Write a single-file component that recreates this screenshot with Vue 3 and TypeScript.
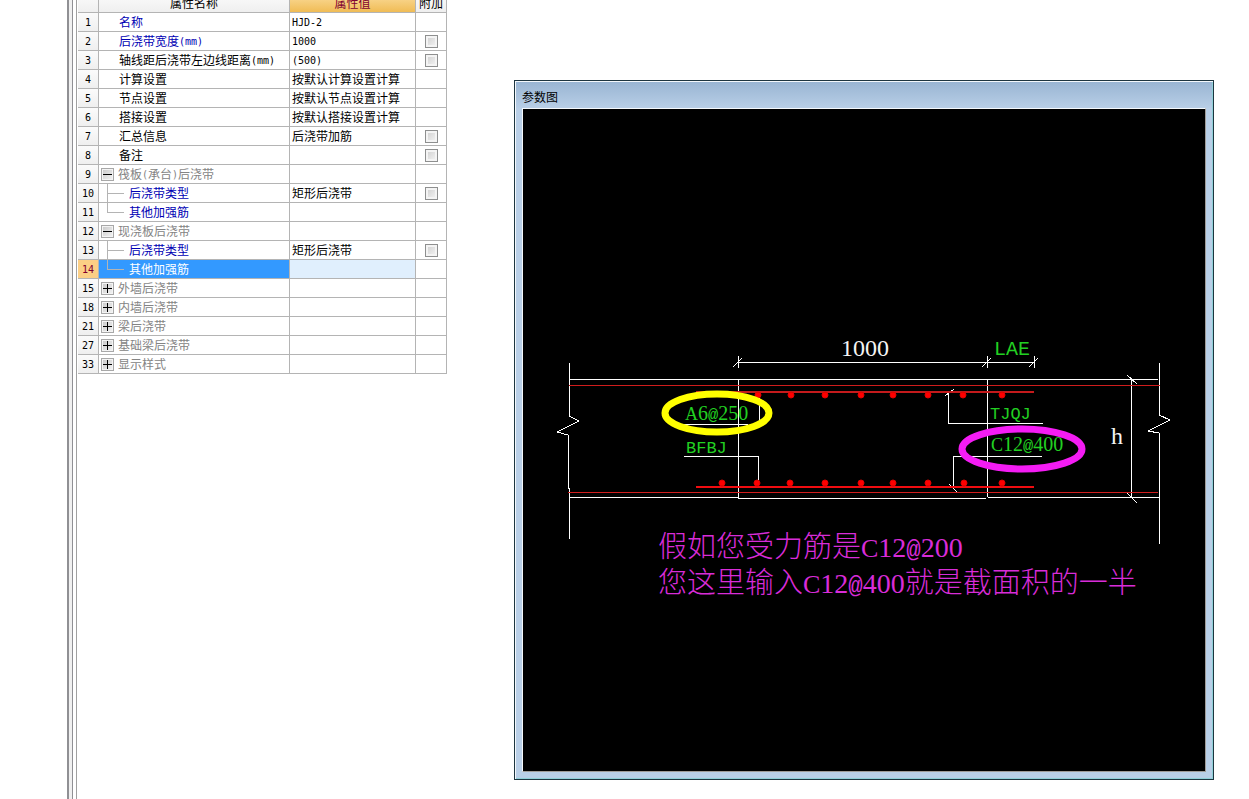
<script setup lang="ts">
import { computed, reactive, ref } from 'vue'

interface Part { text: string; latin?: boolean }
interface Row {
  id: number
  name: Part[]
  value: Part[]
  kind: 'key' | 'plain' | 'group' | 'child'
  check?: boolean
  parent?: number
  last?: boolean
}

const zh = (text: string): Part => ({ text })
const en = (text: string): Part => ({ text, latin: true })

const rows: Row[] = [
  { id: 1, name: [zh('名称')], value: [en('HJD-2')], kind: 'key' },
  { id: 2, name: [zh('后浇带宽度'), en('(mm)')], value: [en('1000')], kind: 'key', check: true },
  { id: 3, name: [zh('轴线距后浇带左边线距离'), en('(mm)')], value: [en('(500)')], kind: 'plain', check: true },
  { id: 4, name: [zh('计算设置')], value: [zh('按默认计算设置计算')], kind: 'plain' },
  { id: 5, name: [zh('节点设置')], value: [zh('按默认节点设置计算')], kind: 'plain' },
  { id: 6, name: [zh('搭接设置')], value: [zh('按默认搭接设置计算')], kind: 'plain' },
  { id: 7, name: [zh('汇总信息')], value: [zh('后浇带加筋')], kind: 'plain', check: true },
  { id: 8, name: [zh('备注')], value: [], kind: 'plain', check: true },
  { id: 9, name: [zh('筏板'), en('('), zh('承台'), en(')'), zh('后浇带')], value: [], kind: 'group' },
  { id: 10, name: [zh('后浇带类型')], value: [zh('矩形后浇带')], kind: 'child', check: true, parent: 9 },
  { id: 11, name: [zh('其他加强筋')], value: [], kind: 'child', parent: 9, last: true },
  { id: 12, name: [zh('现浇板后浇带')], value: [], kind: 'group' },
  { id: 13, name: [zh('后浇带类型')], value: [zh('矩形后浇带')], kind: 'child', check: true, parent: 12 },
  { id: 14, name: [zh('其他加强筋')], value: [], kind: 'child', parent: 12, last: true },
  { id: 15, name: [zh('外墙后浇带')], value: [], kind: 'group' },
  { id: 18, name: [zh('内墙后浇带')], value: [], kind: 'group' },
  { id: 21, name: [zh('梁后浇带')], value: [], kind: 'group' },
  { id: 27, name: [zh('基础梁后浇带')], value: [], kind: 'group' },
  { id: 33, name: [zh('显示样式')], value: [], kind: 'group' },
]

const open = reactive<Record<number, boolean>>({ 9: true, 12: true })
const checked = reactive<Record<number, boolean>>({})
const selected = ref(14)
const visible = computed(() => rows.filter(r => r.parent === undefined || open[r.parent]))
const label = (r: Row) => r.name.map(p => p.text).join('')

const topBars = [758, 791, 825, 861, 893, 928, 963, 1002]
const bottomBars = [722, 757, 790, 825, 861, 893, 928, 964, 1002]
const ticks = [738, 987, 1034]
</script>

<template>
  <main class="page">
    <div class="splitter"></div>
    <section class="properties">
      <table>
        <colgroup><col class="c-no"><col class="c-name"><col class="c-value"><col class="c-add"></colgroup>
        <thead>
          <tr><th></th><th>属性名称</th><th class="active">属性值</th><th>附加</th></tr>
        </thead>
        <tbody>
          <tr v-for="r in visible" :key="r.id" :class="{ selected: r.id === selected }" @click="selected = r.id">
            <th scope="row"><span class="latin">{{ r.id }}</span></th>
            <td class="name" :class="r.kind">
              <div class="cell">
                <button v-if="r.kind === 'group'" type="button" class="toggle"
                  :aria-label="label(r)" :aria-expanded="!!open[r.id]" @click.stop="open[r.id] = !open[r.id]">
                  <svg viewBox="0 0 9 9" shape-rendering="crispEdges">
                    <rect x="0" y="4" width="9" height="1" />
                    <rect v-if="!open[r.id]" x="4" y="0" width="1" height="9" />
                  </svg>
                </button>
                <span v-if="r.kind === 'child'" class="branch" :class="{ last: r.last }"></span>
                <span class="label"><span v-for="(p, i) in r.name" :key="i" :class="{ latin: p.latin }">{{ p.text }}</span></span>
              </div>
            </td>
            <td class="value"><span v-for="(p, i) in r.value" :key="i" :class="{ latin: p.latin }">{{ p.text }}</span></td>
            <td class="add"><input v-if="r.check" v-model="checked[r.id]" type="checkbox" :aria-label="'附加 ' + label(r)"></td>
          </tr>
        </tbody>
      </table>
    </section>

    <section class="window">
      <h1>参数图</h1>
      <div class="canvas">
        <svg class="drawing" viewBox="523 109 682 662">
          <g class="white" shape-rendering="crispEdges">
            <path d="M569 363V416L579 421L557 432L568 435V488H569V539" />
            <path d="M1159 363V415L1170 420L1148 431L1159 433V544" />
            <path d="M569 379H1158M569 497H738M738 498H986M988 497H1159" />
            <path d="M738 379V498M987 379V497" />
            <path d="M738 362H1035" />
            <path v-for="x in ticks" :key="x" :d="`M${x} 356V368M${x - 5} 367L${x + 4} 358`" />
            <path d="M1131 379V498M1127 375L1137 384M1127 493L1137 503" />
            <path d="M684 424H748M759 398V424M684 456H758V480" />
            <path d="M1043 423H948V392M945 396L954 389" />
            <path d="M1042 456H953V487M949 484L957 492" />
          </g>
          <g class="steel" shape-rendering="crispEdges">
            <path d="M569 385H1160" />
            <path d="M568 492H1158" />
            <path class="dull" d="M696 392H1034" />
            <path class="bright" d="M696 487H1034" />
          </g>
          <g class="bars">
            <circle v-for="x in topBars" :key="x" :cx="x" cy="395" r="3" />
            <circle v-for="x in bottomBars" :key="x" :cx="x" cy="483" r="3" />
          </g>
          <text class="dim" x="841" y="356">1000</text>
          <text class="dim" x="1111" y="444">h</text>
          <text class="code large" x="994" y="355">LAE</text>
          <text class="code" x="685" y="420"><tspan class="cap">A</tspan><tspan class="num">6</tspan>@<tspan class="num">250</tspan></text>
          <text class="code" x="686" y="453">BFBJ</text>
          <text class="code" x="990" y="419">TJQJ</text>
          <text class="code" x="991" y="451"><tspan class="cap">C</tspan><tspan class="num">12</tspan>@<tspan class="num">400</tspan></text>
          <ellipse class="ring yellow" cx="717" cy="413" rx="52" ry="19" />
          <ellipse class="ring magenta" cx="1022" cy="449" rx="60" ry="20" />
          <text class="note" x="658" y="557">假如您受力筋是<tspan class="letter">C</tspan><tspan class="digits">12</tspan><tspan class="at">@</tspan><tspan class="digits">200</tspan></text>
          <text class="note" x="658" y="593">您这里输入<tspan class="letter">C</tspan><tspan class="digits">12</tspan><tspan class="at">@</tspan><tspan class="digits">400</tspan>就是截面积的一半</text>
        </svg>
      </div>
    </section>
  </main>
</template>

<style>
html, body { margin: 0; background: #fff; }
</style>

<style scoped>
.page {
  display: flex;
  height: 100vh;
  overflow: hidden;
  box-sizing: border-box;
  padding-left: 67px;
  background: #fff;
  font: 12px/18px "Noto Sans CJK SC", sans-serif;
  color: #000;
}
.splitter {
  flex: none;
  box-sizing: border-box;
  width: 6px;
  border-left: 2px solid #909094;
  border-right: 1px solid #909094;
  background: #f0f0f0;
}
.properties {
  flex: none;
  margin-left: 3px;
  padding-left: 1px;
  border-left: 1px solid #a0a0a0;
}
table {
  width: 369px;
  margin-top: -6px;
  table-layout: fixed;
  border-spacing: 0;
}
.c-no { width: 21px; }
.c-name { width: 191px; }
.c-value { width: 126px; }
.c-add { width: 31px; }
th, td {
  box-sizing: border-box;
  height: 19px;
  padding: 0;
  border-right: 1px solid #b4b4b4;
  border-bottom: 1px solid #b4b4b4;
  font-weight: 400;
  line-height: 18px;
  white-space: nowrap;
}
th { background: linear-gradient(#fbfbfb, #efefef); text-align: center; }
th.active { background: linear-gradient(#fbdc9c, #f0bc55); color: #800030; }
.latin { font: 10px/0 "DejaVu Sans Mono", monospace; vertical-align: 1px; }
.cell { display: flex; align-items: center; height: 18px; }
.label { padding-left: 20px; }
.key, .child { color: #0000b4; }
.group { color: #848484; }
.group .label { padding-left: 4px; }
.child .label { padding-left: 5px; }
.toggle {
  flex: none;
  display: grid;
  place-items: center;
  box-sizing: border-box;
  width: 13px;
  height: 13px;
  margin-left: 2px;
  padding: 0;
  border: 1px solid #a8a8a8;
  background: linear-gradient(135deg, #c8c8c8, #f4f4f4);
  box-shadow: inset 0 0 0 1px #f4f4f4;
}
.toggle svg { width: 9px; height: 9px; fill: #000; }
.branch {
  flex: none;
  width: 17px;
  height: 20px;
  margin-left: 8px;
  background: linear-gradient(#b4b4b4, #b4b4b4) 0 10px / 17px 1px no-repeat,
    linear-gradient(#b4b4b4, #b4b4b4) 0 0 / 1px 20px no-repeat;
}
.branch.last { background-size: 17px 1px, 1px 10px; }
.value { padding-left: 2px; }
.add { text-align: center; vertical-align: middle; line-height: 0; }
.add input {
  appearance: none;
  box-sizing: border-box;
  width: 13px;
  height: 13px;
  margin: 0;
  vertical-align: middle;
  border: 1px solid #8e8f8f;
  background: linear-gradient(135deg, #cdcdcd, #f6f6f6);
  box-shadow: inset 0 0 0 2px #f4f4f4;
}
.add input:checked { background: #4a6fa0; }
.selected th { background: #fccf85; color: #800030; }
.selected .name { background: #3399ff; color: #fff; }
.selected .value { background: #e0effd; }

.window {
  flex: 1;
  display: flex;
  flex-direction: column;
  min-width: 0;
  box-sizing: border-box;
  margin: 80px 35px 19px 67px;
  padding: 0 7px;
  border: 1px solid #1d3540;
  box-shadow: inset 1px 1px #f4f8fc, inset -1px -1px #8fd0d8;
  background: linear-gradient(#98b4d2, #b9cfe7 28px);
}
h1 {
  margin: 0;
  padding: 7px 0 2px;
  font-size: 12px;
  font-weight: 400;
  line-height: 18px;
}
.canvas {
  flex: 1;
  min-height: 0;
  margin-bottom: 7px;
  border: 1px solid #f4f8fc;
  border-right-color: #a09c98;
  border-bottom-color: #a09c98;
  background: #000;
}
.drawing { display: block; width: 100%; height: 100%; }
.white { fill: none; stroke: #fff; stroke-width: 1; }
.steel { fill: none; stroke: #d01c1c; stroke-width: 1; }
.dull { stroke: #c41a1c; stroke-width: 2; }
.bright { stroke: #f00c10; stroke-width: 2; }
.bars { fill: #ff0000; stroke: #e00000; stroke-width: 1; }
.dim { font: 24px "Liberation Serif", serif; fill: #f4f4f4; }
.code { font: 17px "Liberation Mono", monospace; fill: #22d022; }
.large { font-size: 20px; }
.num { font: 20px "Liberation Serif", serif; }
.cap { font: 18px "Liberation Serif", serif; }
.ring { fill: none; stroke-width: 7; }
.yellow { stroke: #ffff00; }
.magenta { stroke: #f41cf4; }
.note { font: 300 29px "Noto Sans CJK SC", sans-serif; fill: #d82cd8; }
.letter { font: 26px "Liberation Serif", serif; }
.digits { font: 28px "Liberation Serif", serif; }
.at { font: 24px "Liberation Mono", monospace; }
</style>
